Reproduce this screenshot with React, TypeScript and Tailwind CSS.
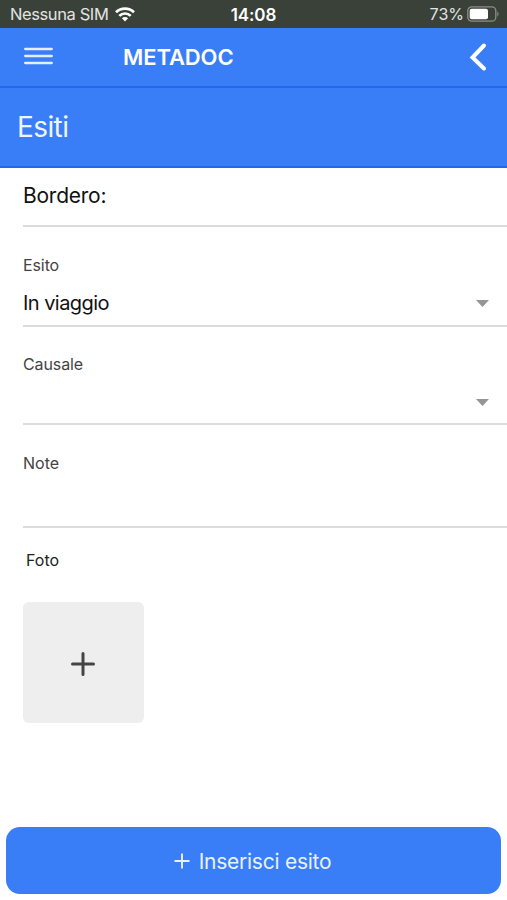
import { useState } from 'react'

interface SelectFieldProps {
  label: string
  value: string
  onClick: () => void
}

function StatusBar() {
  return (
    <div className="flex h-7 items-center bg-[#3a4139] text-[#e2e4e1]">
      <div className="flex flex-1 items-center pl-[10px]">
        <span className="w-[99px] whitespace-nowrap text-[16.5px] leading-7 tracking-[-0.4px]">Nessuna SIM</span>
        <svg className="ml-[6px] h-[15px] w-5" viewBox="0 0 20 15" fill="none" stroke="#fff" strokeWidth="2.7">
          <path d="M1 5.2C6 .3 14 .3 19 5.2" />
          <path d="M4.3 8.9c3.2-3.2 8.2-3.2 11.4 0" />
          <path d="M6.9 11.2c1.7-1.7 4.5-1.7 6.2 0L10 14.5z" fill="#fff" stroke="none" />
        </svg>
      </div>
      <span className="pr-[2px] pt-px text-[17px] font-semibold leading-7 tracking-[-0.1px] text-white">14:08</span>
      <div className="flex flex-1 items-center justify-end pr-2">
        <span className="text-[16px] leading-7">73%</span>
        <svg className="ml-[3px] h-4 w-8" viewBox="0 0 32 16">
          <rect x=".8" y=".8" width="28" height="14.4" rx="4" fill="none" stroke="#8b8f8a" strokeWidth="1.3" />
          <rect x="2.7" y="2.7" width="18.3" height="10.6" rx="2" fill="#fff" />
          <path d="M30.3 5.5c1.6.8 1.6 4.2 0 5z" fill="#8b8f8a" />
        </svg>
      </div>
    </div>
  )
}

function SelectField({ label, value, onClick }: SelectFieldProps) {
  return (
    <button
      type="button"
      onClick={onClick}
      className="flex w-full flex-1 flex-col border-b-2 border-[#dcdcdc] pt-[25px] text-left"
    >
      <span className="text-[16px] leading-6 tracking-[-0.1px] text-[#444]">{label}</span>
      <span className="flex h-[52px] w-full shrink-0 items-center justify-between pr-[18px]">
        <span className="text-[20px] leading-7 tracking-[-0.55px] text-[#111]">{value}</span>
        <svg className="h-[7px] w-[13px]" viewBox="0 0 13 7">
          <path d="M0 0h13L6.5 7z" fill="#959595" />
        </svg>
      </span>
    </button>
  )
}

export default function App() {
  const [causale, setCausale] = useState('')

  return (
    <div className="flex h-[900px] w-full flex-col overflow-hidden bg-white font-['Inter','Liberation_Sans',sans-serif]">
      <StatusBar />

      <header className="flex h-[60px] items-center border-b-2 border-[#2467e8] bg-[#397ef6] pl-6 pr-5 text-white">
        <button type="button" aria-label="Menu" className="w-[99px] pb-[2px]">
          <svg className="h-[18px] w-[29px]" viewBox="0 0 29 18" stroke="#e4eeff" strokeWidth="2.3" strokeLinecap="round">
            <path d="M1.2 2h26.6M1.2 9h26.6M1.2 16h26.6" />
          </svg>
        </button>
        <h1 className="flex-1 text-[22px] font-semibold tracking-[-0.1px]">METADOC</h1>
        <button type="button" aria-label="Back">
          <svg className="h-[30px] w-[18px]" viewBox="0 0 18 30" fill="none" stroke="#fff" strokeWidth="4" strokeLinecap="round">
            <path d="M15 3.5L3.5 15.5 15 26.5" />
          </svg>
        </button>
      </header>

      <div className="flex h-20 items-center border-b-2 border-[#2467e8] bg-[#397ef6] pl-[17px]">
        <h2 className="text-[28px] tracking-[-0.6px] text-[#eff5ff]">Esiti</h2>
      </div>

      <main className="flex flex-1 flex-col pl-[23px]">
        <div className="h-[59px] border-b-2 border-[#dcdcdc] pt-[13px] text-[21px] leading-[30px] tracking-[-0.25px] text-[#111]">
          Bordero:
        </div>
        <div className="flex h-[100px] pt-px">
          <SelectField label="Esito" value="In viaggio" onClick={() => setCausale('')} />
        </div>
        <div className="flex h-[98px]">
          <SelectField label="Causale" value={causale} onClick={() => setCausale('')} />
        </div>
        <div className="h-[103px] border-b-2 border-[#dcdcdc] pt-[26px] text-[16px] leading-6 text-[#444]">Note</div>
        <div className="mt-5 pl-[3px] text-[16px] leading-6 text-[#222]">Foto</div>
        <button
          type="button"
          aria-label="Foto"
          className="mt-[30px] flex h-[121px] w-[121px] items-center justify-center rounded-md bg-[#eee] pr-[2px] pt-[2px]"
        >
          <svg className="h-6 w-6" viewBox="0 0 24 24" stroke="#444" strokeWidth="3" strokeLinecap="round">
            <path d="M12 1.5v21M1.5 12h21" />
          </svg>
        </button>
      </main>

      <footer className="px-[6px] pb-[6px]">
        <button
          type="button"
          className="flex h-[67px] w-full items-center justify-center rounded-[14px] bg-[#397ef6] pr-[2px] text-[21px] tracking-[-0.25px] text-[#e9f1ff]"
        >
          <svg className="mr-[9px] h-4 w-4" viewBox="0 0 16 16" stroke="#e9f1ff" strokeWidth="1.9">
            <path d="M8 .5v15M.5 8h15" />
          </svg>
          <span className="pt-[2px]">Inserisci esito</span>
        </button>
      </footer>
    </div>
  )
}
